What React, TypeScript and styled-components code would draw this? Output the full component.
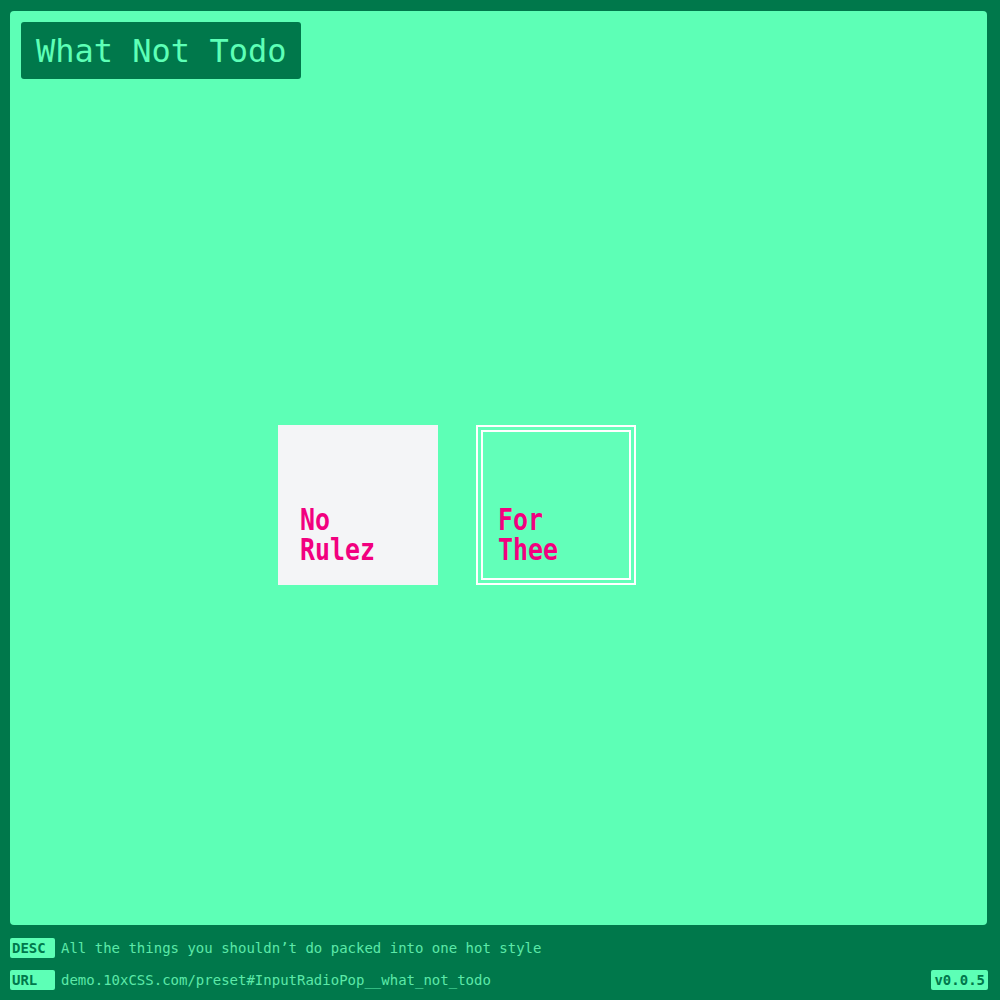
import styled, { createGlobalStyle } from 'styled-components'

const DARK = '#00784b'
const MINT = '#5dffb6'
const PINK = '#f2007f'

const GlobalStyle = createGlobalStyle`
	html, body {
		margin: 0;
		padding: 0;
		background-color: ${DARK};
	}
	* {
		box-sizing: border-box;
	}
`

export default function App() {
	return (
		<>
			<GlobalStyle />
			<Page>
				<Panel>
					<Title>What Not Todo</Title>

					<RadioGroup>
						<Choice variant='solid'>
							<Label>No<br />Rulez</Label>
						</Choice>
						<Choice variant='double'>
							<Label>For<br />Thee</Label>
						</Choice>
					</RadioGroup>
				</Panel>

				<Footer>
					<InfoRow>
						<Tag>DESC</Tag>
						<InfoText>All the things you shouldn’t do packed into one hot style</InfoText>
					</InfoRow>
					<InfoRow>
						<Tag>URL</Tag>
						<InfoText>demo.10xCSS.com/preset#InputRadioPop__what_not_todo</InfoText>
						<Version>v0.0.5</Version>
					</InfoRow>
				</Footer>
			</Page>
		</>
	)
}

const Page = styled.div`
	height: 100vh;
	display: flex;
	flex-direction: column;
	padding: 11px 13px 0 10px;
	font-family: 'DejaVu Sans Mono', 'Liberation Mono', monospace;
`

const Panel = styled.div`
	flex: 1;
	background-color: ${MINT};
	border-radius: 4px;
	padding: 11px;
	display: flex;
	flex-direction: column;
	align-items: flex-start;
`

const Title = styled.h1`
	margin: 0;
	height: 57px;
	display: flex;
	align-items: center;
	padding: 0 15px;
	background-color: ${DARK};
	color: ${MINT};
	border-radius: 3px;
	font-size: 32px;
	font-weight: 500;
	letter-spacing: 0;
`

const RadioGroup = styled.div`
	display: flex;
	gap: 38px;
	margin-top: 346px;
	padding-left: 257px;
`

const Choice = styled.div<{ variant: 'solid' | 'double' }>`
	width: 160px;
	height: 160px;
	display: flex;
	flex-direction: column;
	justify-content: flex-end;
	padding: ${({ variant }) => (variant === 'double' ? '0 15px 13px' : '0 22px 20px')};
	background-color: ${({ variant }) => (variant === 'double' ? '#62ffb9' : '#f4f5f7')};
	border: ${({ variant }) => (variant === 'double' ? '7px double #ffffff' : 'none')};
`

const Label = styled.span`
	display: block;
	color: ${PINK};
	font-size: 30px;
	font-weight: bold;
	line-height: 30px;
	transform: scaleX(0.83);
	transform-origin: left center;
	white-space: nowrap;
`

const Footer = styled.div`
	display: flex;
	flex-direction: column;
	gap: 12px;
	padding: 13px 0 10px;
`

const InfoRow = styled.div`
	display: flex;
	align-items: center;
	gap: 6px;
	height: 20px;
`

const Tag = styled.span`
	min-width: 45px;
	height: 20px;
	line-height: 20px;
	padding: 0 2px;
	background-color: ${MINT};
	color: ${DARK};
	border-radius: 2px;
	font-size: 14px;
	font-weight: bold;
`

const InfoText = styled.span`
	color: #5ce8a8;
	font-size: 14px;
	line-height: 20px;
`

const Version = styled(Tag)`
	min-width: 0;
	margin-left: auto;
	margin-right: -1px;
	padding: 0 3px;
`
